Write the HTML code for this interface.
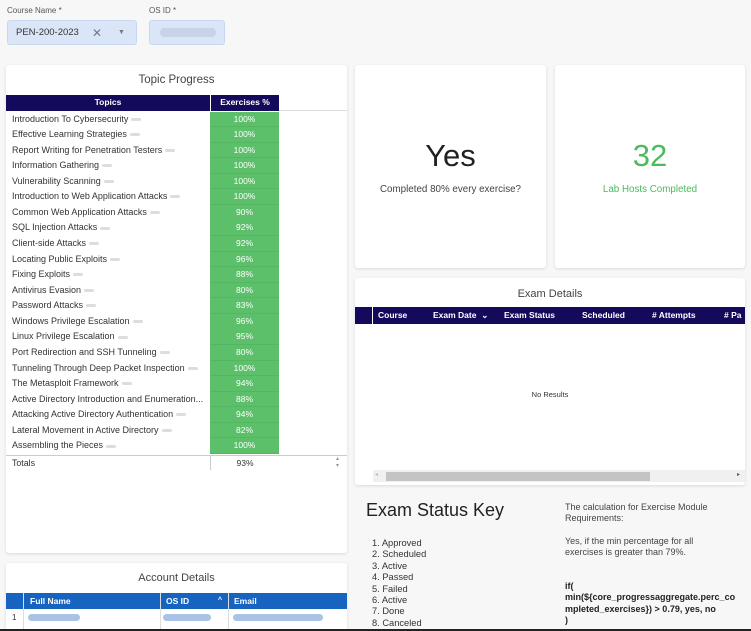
<!DOCTYPE html>
<html><head><meta charset="utf-8"><style>
*{box-sizing:border-box;margin:0;padding:0}
body{width:751px;height:631px;overflow:hidden;background:#f7f7f7;font-family:"Liberation Sans",sans-serif;color:#333;position:relative}
.abs{position:absolute}
.card{position:absolute;background:#fff;border-radius:3px;box-shadow:0 1px 3px rgba(0,0,0,.12)}
.lbl{font-size:8px;color:#555}
.row{position:absolute;left:6px;width:341px;height:15.6px;font-size:9px;line-height:15.6px}
.row .t{position:absolute;left:6px;color:#333;white-space:nowrap}
.row .t i{display:inline-block;width:10px;height:3px;background:#ddd;border-radius:2px;margin-left:3px;vertical-align:middle}
.row .v{position:absolute;left:204px;width:69px;height:15.6px;background:#5cbf6a;color:#fff;text-align:center;border-bottom:1px solid #55b563;font-size:8.5px}
.hdr{position:absolute;color:#fff;font-weight:bold;font-size:8.5px;line-height:17px}
</style></head><body>
<div class="abs lbl" style="left:7px;top:6px">Course Name *</div>
<div class="abs lbl" style="left:149px;top:6px">OS ID *</div>
<div class="abs" style="left:7px;top:20px;width:130px;height:25px;background:#dae6f7;border:1px solid #c8d8ee;border-radius:3px;font-size:9.5px;line-height:24px;padding-left:8px;color:#333">PEN-200-2023<span style="position:absolute;left:84px;color:#777;font-size:12px">✕</span><span style="position:absolute;left:110px;color:#777;font-size:7px">▼</span></div>
<div class="abs" style="left:149px;top:20px;width:76px;height:25px;background:#dae6f7;border:1px solid #c8d8ee;border-radius:3px"><div style="margin:7px 0 0 10px;width:56px;height:9px;background:#c7d3e6;border-radius:5px"></div></div>

<div class="card" style="left:6px;top:65px;width:341px;height:488px"></div>
<div class="abs" style="left:6px;top:74px;width:341px;text-align:center;font-size:11.5px;color:#444">Topic Progress</div>
<div class="abs" style="left:6px;top:95px;width:273px;height:16px;background:#140a5c"></div>
<div class="abs" style="left:279px;top:110px;width:68px;height:1px;background:#ddd"></div>
<div class="hdr" style="left:6px;top:94px;width:204px;text-align:center">Topics</div>
<div class="abs" style="left:210px;top:95px;width:1px;height:16px;background:#fff"></div>
<div class="hdr" style="left:211px;top:94px;width:68px;text-align:center">Exercises %</div>
<div id="rows"></div>
<script>
var d=[["Introduction To Cybersecurity","100%"],["Effective Learning Strategies","100%"],["Report Writing for Penetration Testers","100%"],["Information Gathering","100%"],["Vulnerability Scanning","100%"],["Introduction to Web Application Attacks","100%"],["Common Web Application Attacks","90%"],["SQL Injection Attacks","92%"],["Client-side Attacks","92%"],["Locating Public Exploits","96%"],["Fixing Exploits","88%"],["Antivirus Evasion","80%"],["Password Attacks","83%"],["Windows Privilege Escalation","96%"],["Linux Privilege Escalation","95%"],["Port Redirection and SSH Tunneling","80%"],["Tunneling Through Deep Packet Inspection","100%"],["The Metasploit Framework","94%"],["Active Directory Introduction and Enumeration...","88%"],["Attacking Active Directory Authentication","94%"],["Lateral Movement in Active Directory","82%"],["Assembling the Pieces","100%"]];
var h="";d.forEach(function(r,i){h+='<div class="row" style="top:'+(111.5+i*15.57)+'px"><span class="t">'+r[0]+(i==18?'':'<i></i>')+'</span><span class="v" style="left:204px">'+r[1]+'</span></div>';});
document.getElementById("rows").innerHTML=h;
</script>
<div class="abs" style="left:6px;top:455px;width:341px;height:1px;background:#ccc"></div>
<div class="abs" style="left:210px;top:456px;width:1px;height:14px;background:#ccc"></div>
<div class="abs" style="left:12px;top:458px;font-size:8.8px">Totals</div>
<div class="abs" style="left:211px;top:458px;width:68px;text-align:center;font-size:8.5px">93%</div>
<div class="abs" style="left:336px;top:456px;font-size:6px;color:#999;line-height:7px">▴<br>▾</div>

<div class="card" style="left:355px;top:65px;width:191px;height:203px"></div>
<div class="abs" style="left:355px;top:138px;width:191px;text-align:center;font-size:31px;color:#222">Yes</div>
<div class="abs" style="left:355px;top:184px;width:191px;text-align:center;font-size:9.8px;color:#444">Completed 80% every exercise?</div>
<div class="card" style="left:555px;top:65px;width:190px;height:203px"></div>
<div class="abs" style="left:555px;top:138px;width:190px;text-align:center;font-size:31px;color:#4cbb5e">32</div>
<div class="abs" style="left:555px;top:184px;width:190px;text-align:center;font-size:9.8px;color:#4cbb5e">Lab Hosts Completed</div>

<div class="card" style="left:355px;top:278px;width:390px;height:207px"></div>
<div class="abs" style="left:355px;top:288px;width:390px;text-align:center;font-size:11px;color:#444">Exam Details</div>
<div class="abs" style="left:355px;top:307px;width:390px;height:17px;background:#140a5c"></div>
<div class="abs" style="left:372px;top:307px;width:1px;height:17px;background:#fff"></div>
<div class="hdr" style="left:378px;top:307px">Course</div>
<div class="hdr" style="left:433px;top:307px">Exam Date &nbsp;⌄</div>
<div class="hdr" style="left:504px;top:307px">Exam Status</div>
<div class="hdr" style="left:582px;top:307px">Scheduled</div>
<div class="hdr" style="left:652px;top:307px"># Attempts</div>
<div class="hdr" style="left:724px;top:307px"># Pa</div>
<div class="abs" style="left:355px;top:390px;width:390px;text-align:center;font-size:7.5px;color:#333">No Results</div>
<div class="abs" style="left:373px;top:470px;width:372px;height:12px;background:#f0f0f0"></div>
<div class="abs" style="left:386px;top:472px;width:264px;height:9px;background:#c4c4c4"></div>
<div class="abs" style="left:375px;top:471px;font-size:6px;color:#bbb">◂</div>
<div class="abs" style="left:737px;top:471px;font-size:6px;color:#555">▸</div>

<div class="abs" style="left:366px;top:500px;font-size:18px;color:#222">Exam Status Key</div>
<div class="abs" style="left:372px;top:538px;font-size:9.3px;line-height:11.4px;color:#333">1. Approved<br>2. Scheduled<br>3. Active<br>4. Passed<br>5. Failed<br>6. Active<br>7. Done<br>8. Canceled</div>
<div class="abs" style="left:565px;top:502px;width:170px;font-size:9px;line-height:11px;color:#444">The calculation for Exercise Module Requirements:</div>
<div class="abs" style="left:565px;top:536px;width:150px;font-size:9px;line-height:11px;color:#444">Yes, if the min percentage for all exercises is greater than 79%.</div>
<div class="abs" style="left:565px;top:581px;width:180px;font-size:9px;line-height:11.4px;color:#222;font-weight:bold">if(<br>min(${core_progressaggregate.perc_co<br>mpleted_exercises}) &gt; 0.79, yes, no<br>)</div>

<div class="card" style="left:6px;top:563px;width:341px;height:68px"></div>
<div class="abs" style="left:6px;top:572px;width:341px;text-align:center;font-size:11px;color:#444">Account Details</div>
<div class="abs" style="left:6px;top:593px;width:341px;height:16px;background:#1763c0"></div>
<div class="abs" style="left:23px;top:593px;width:1px;height:36px;background:#ddd"></div>
<div class="hdr" style="left:30px;top:593px;line-height:16px">Full Name</div>
<div class="abs" style="left:160px;top:593px;width:1px;height:36px;background:#ddd"></div>
<div class="hdr" style="left:166px;top:593px;line-height:16px">OS ID</div>
<div class="hdr" style="left:218px;top:593px;line-height:16px;font-size:7px">^</div>
<div class="abs" style="left:228px;top:593px;width:1px;height:36px;background:#ddd"></div>
<div class="hdr" style="left:234px;top:593px;line-height:16px">Email</div>
<div class="abs" style="left:12px;top:613px;font-size:8px">1</div>
<div class="abs" style="left:28px;top:614px;width:52px;height:7px;background:#a9c3e6;border-radius:4px"></div>
<div class="abs" style="left:163px;top:614px;width:48px;height:7px;background:#a9c3e6;border-radius:4px"></div>
<div class="abs" style="left:233px;top:614px;width:90px;height:7px;background:#a9c3e6;border-radius:4px"></div>
<div class="abs" style="left:0;top:629px;width:751px;height:2px;background:#222"></div>
</body></html>
